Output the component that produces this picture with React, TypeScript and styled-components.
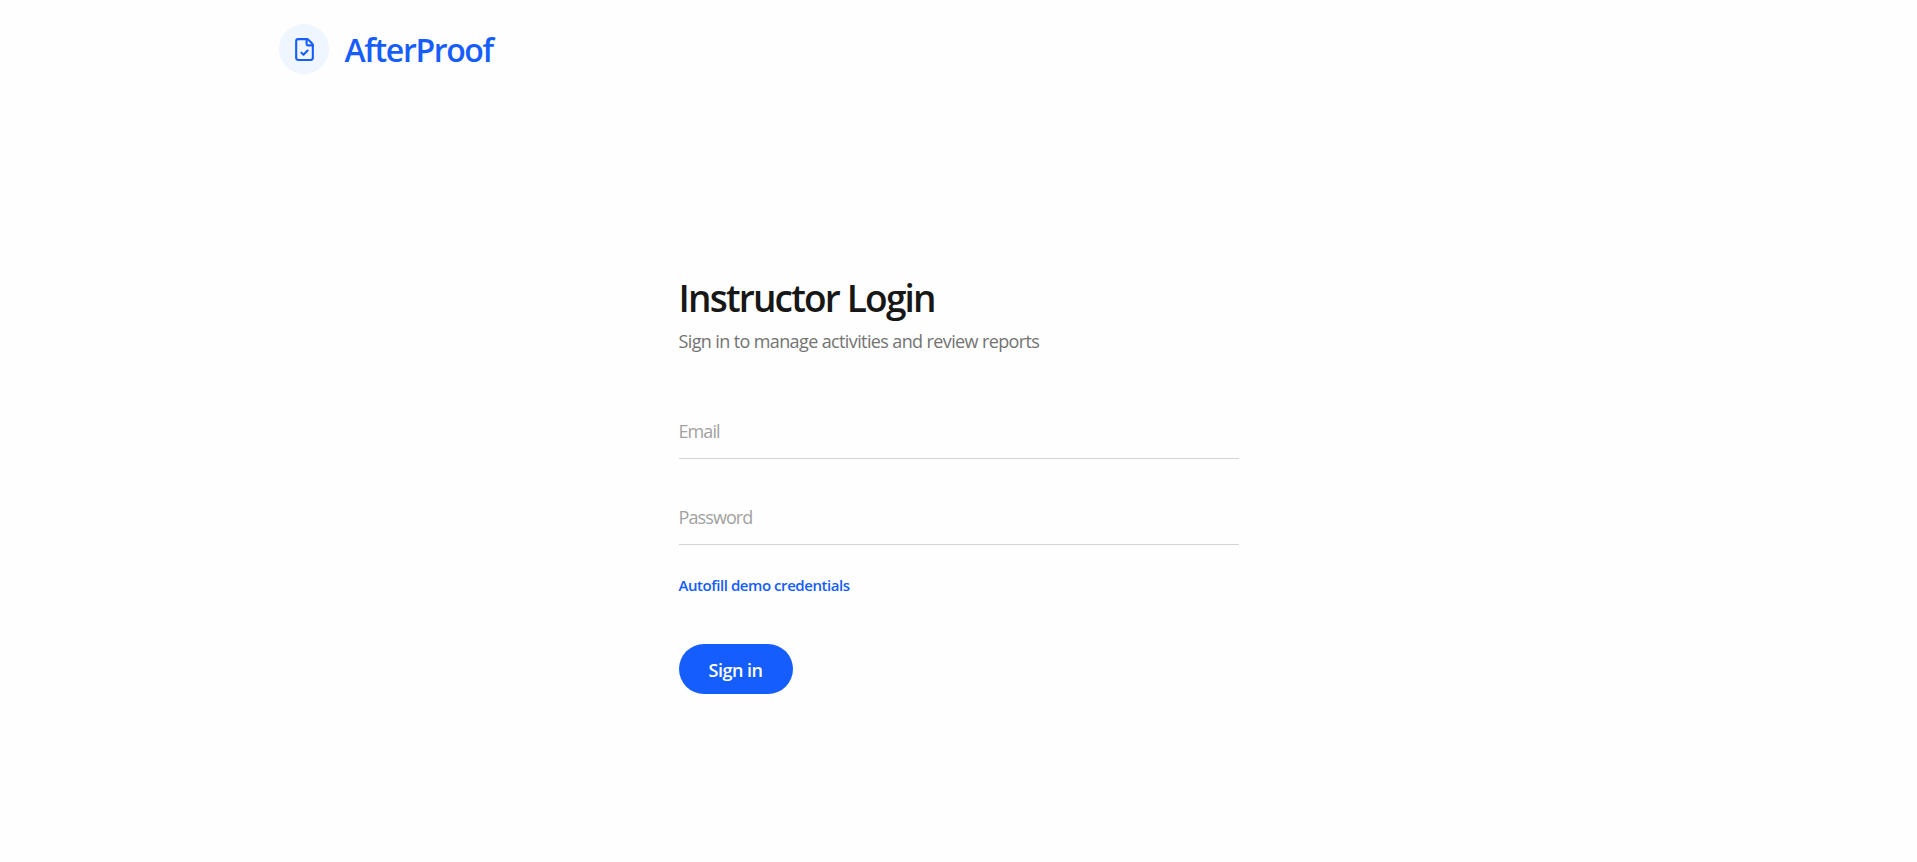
import { useState } from "react";
import styled, { createGlobalStyle } from "styled-components";
import { FileCheck } from "lucide-react";

const GlobalStyle = createGlobalStyle`
  * {
    box-sizing: border-box;
    margin: 0;
    padding: 0;
  }

  body {
    background: #fefefe;
    color: #171717;
    font-family: "Segoe UI", "Open Sans", "Noto Sans", sans-serif;
  }

  button,
  input {
    font-family: inherit;
    border: none;
    outline: none;
    background: none;
  }
`;

const Page = styled.div`
  min-height: 100vh;
`;

const Header = styled.header`
  width: 1360px;
  margin: 0 auto;
  padding: 24px 0;
  display: flex;
  align-items: center;
  gap: 16px;
`;

const LogoMark = styled.div`
  width: 50px;
  height: 50px;
  padding: 1px 0 0 1px;
  border-radius: 50%;
  background: #eff6ff;
  color: #155dfc;
  display: flex;
  align-items: center;
  justify-content: center;
`;

const Brand = styled.span`
  color: #155dfc;
  font-size: 32px;
  line-height: 52px;
  margin-bottom: -2px;
  font-weight: 550;
  letter-spacing: -1.35px;
  white-space: nowrap;
`;

const Main = styled.main`
  width: 560px;
  margin: 0 auto;
  padding-top: 176px;
`;

const Title = styled.h1`
  font-size: 37px;
  line-height: 47px;
  font-weight: 600;
  letter-spacing: -1.8px;
`;

const Subtitle = styled.p`
  margin-top: 6px;
  color: #737373;
  font-size: 18px;
  line-height: 28px;
  letter-spacing: -0.62px;
`;

const Form = styled.form`
  margin-top: 49px;
  display: flex;
  flex-direction: column;
  align-items: flex-start;
`;

const Field = styled.input`
  width: 100%;
  height: 55px;
  margin-bottom: 31px;
  border-bottom: 1px solid #d4d4d4;
  color: #171717;
  font-size: 18px;
  letter-spacing: -0.9px;

  &::placeholder {
    color: #a1a1a1;
    opacity: 1;
  }
`;

const DemoLink = styled.button`
  margin-top: -3px;
  color: #155dfc;
  font-size: 15px;
  line-height: 24px;
  font-weight: 600;
  letter-spacing: -0.44px;
  cursor: pointer;
`;

const SubmitButton = styled.button`
  width: 114px;
  height: 50px;
  margin-top: 47px;
  padding-top: 2px;
  border-radius: 25px;
  background: #155dfc;
  color: #fff;
  font-size: 18px;
  font-weight: 600;
  letter-spacing: -0.5px;
  white-space: nowrap;
  cursor: pointer;
`;

const App = () => {
  const [email, setEmail] = useState("");
  const [password, setPassword] = useState("");

  const fillDemo = () => {
    setEmail("demo@afterproof.app");
    setPassword("demo1234");
  };

  return (
    <Page>
      <GlobalStyle />
      <Header>
        <LogoMark>
          <FileCheck size={25} />
        </LogoMark>
        <Brand>AfterProof</Brand>
      </Header>

      <Main>
        <Title>Instructor Login</Title>
        <Subtitle>Sign in to manage activities and review reports</Subtitle>

        <Form onSubmit={(e) => e.preventDefault()}>
          <Field
            type="email"
            placeholder="Email"
            value={email}
            onChange={(e) => setEmail(e.target.value)}
          />
          <Field
            type="password"
            placeholder="Password"
            value={password}
            onChange={(e) => setPassword(e.target.value)}
          />
          <DemoLink type="button" onClick={fillDemo}>
            Autofill demo credentials
          </DemoLink>
          <SubmitButton type="submit">Sign in</SubmitButton>
        </Form>
      </Main>
    </Page>
  );
};

export default App;
